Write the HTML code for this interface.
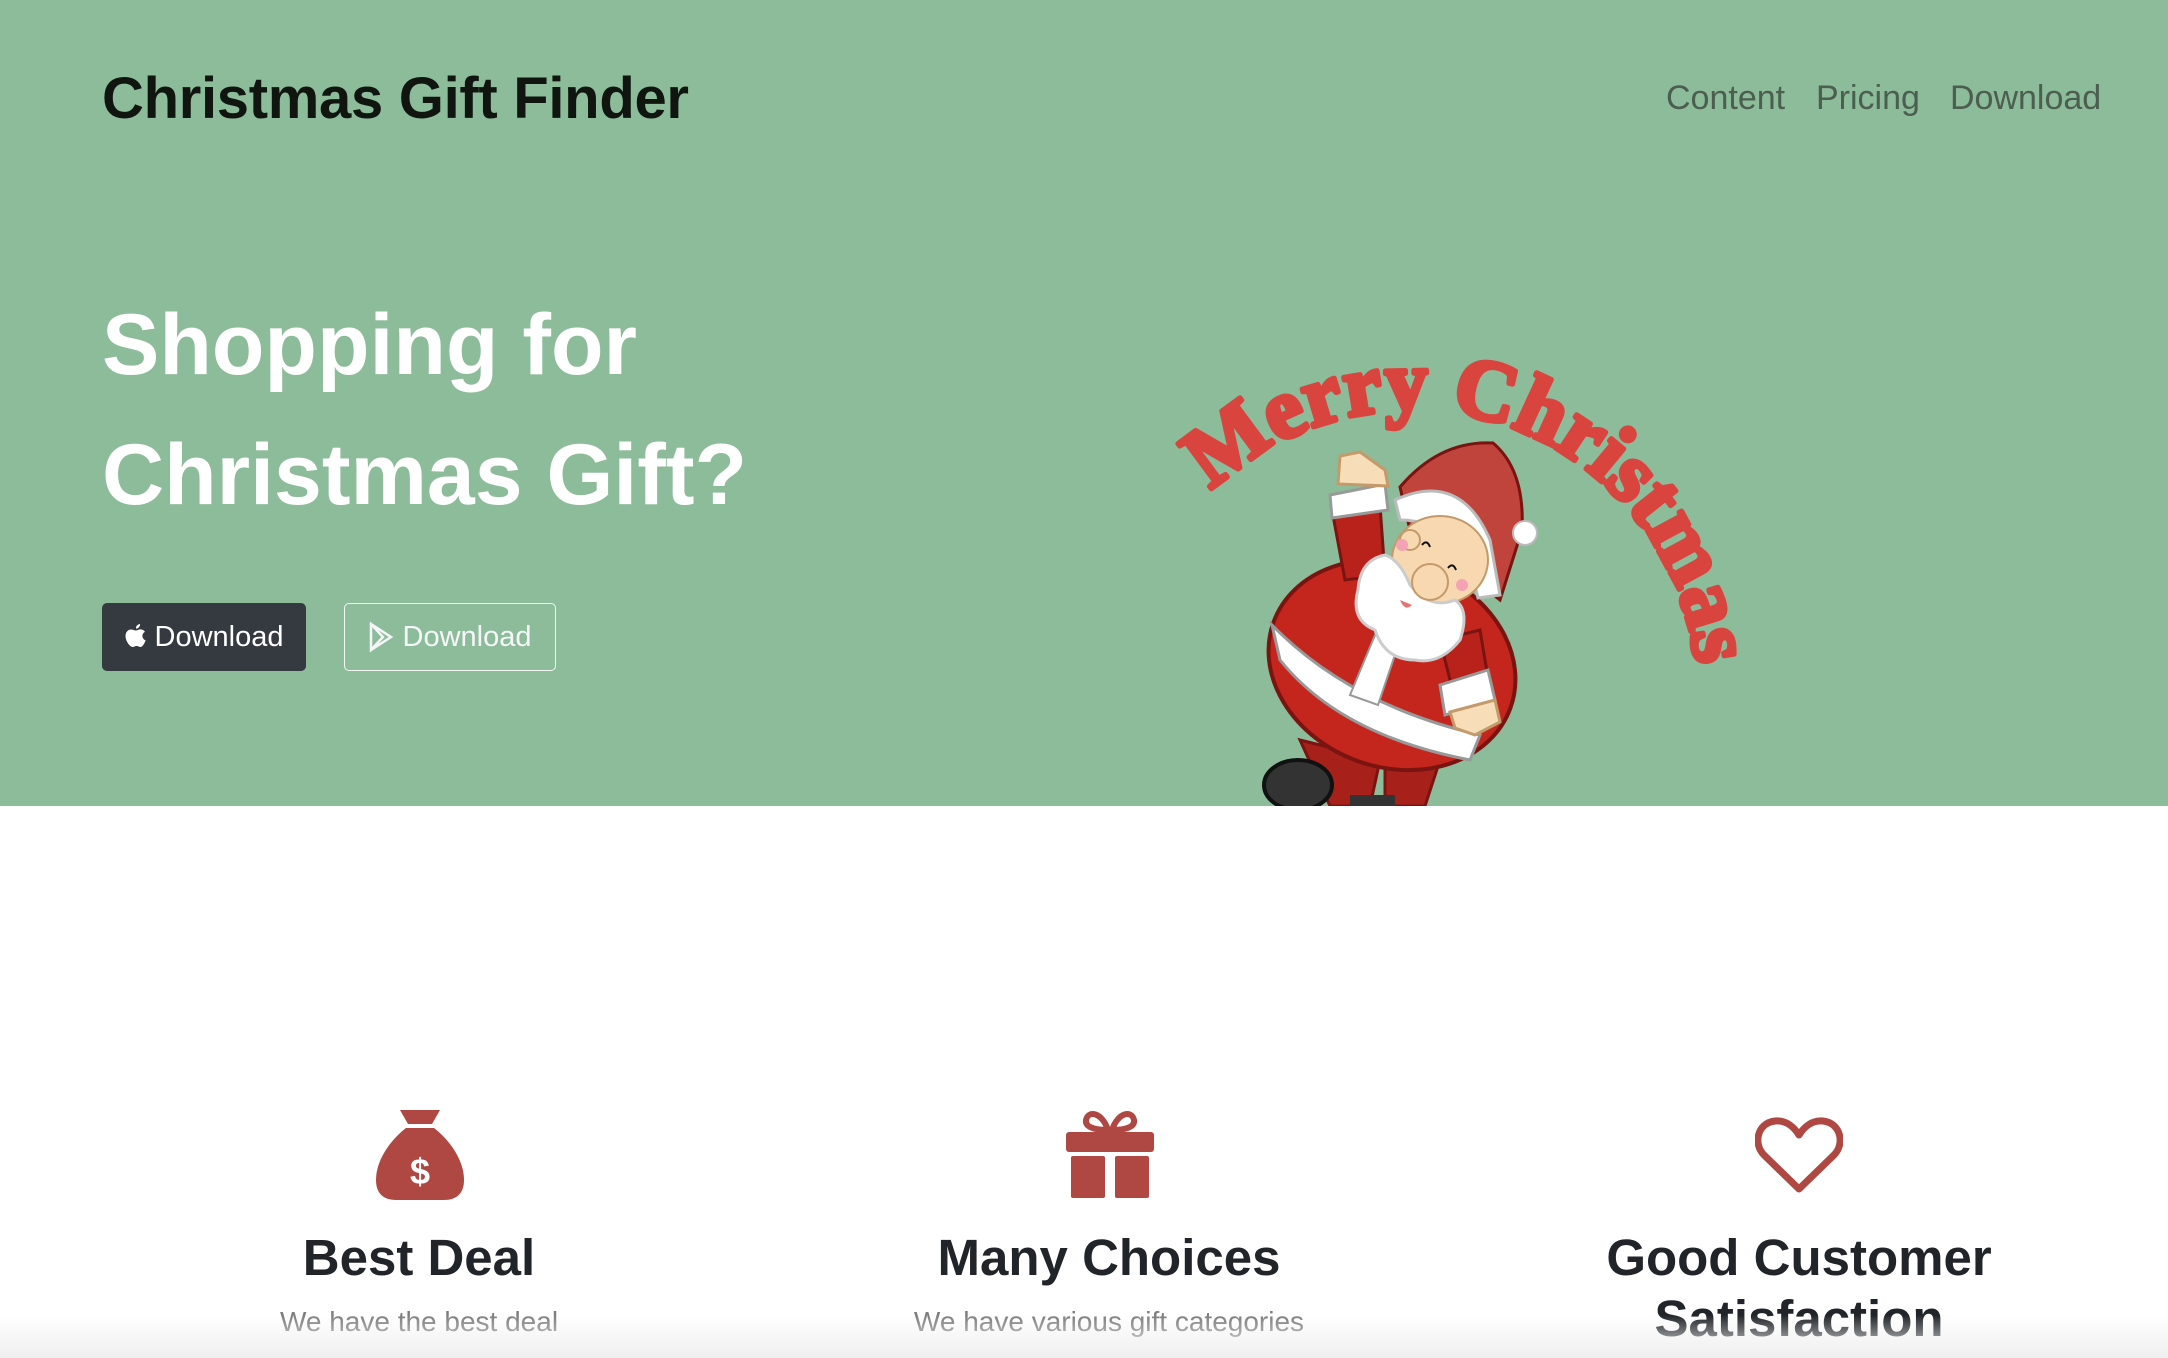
<!DOCTYPE html>
<html><head><meta charset="utf-8">
<style>
*{margin:0;padding:0;box-sizing:border-box}
body{width:2168px;height:1358px;overflow:hidden;background:#fff;font-family:"Liberation Sans",Arial,sans-serif;position:relative}
.hero{position:absolute;left:0;top:0;width:2168px;height:806px;background:#8dbc9b;overflow:hidden}
.brand{position:absolute;left:102px;top:64px;font-size:58px;font-weight:bold;color:#101510;letter-spacing:-0.3px;line-height:70px}
.nav{position:absolute;top:78px;font-size:34px;color:#4b5e50;line-height:40px}
h1{position:absolute;left:102px;top:280px;font-size:86px;line-height:130px;color:#fff;font-weight:bold}
.btn{position:absolute;top:603px;height:68px;border-radius:5px;font-size:29px;color:#fff;display:flex;align-items:center;justify-content:center;gap:8px}
.b1{left:102px;width:204px;background:#343a40}
.b2{left:344px;width:212px;border:1.5px solid #f4f6f4;color:#f4f6f8}
.feat{position:absolute;text-align:center;width:560px}
.feat h2{font-size:51px;font-weight:bold;color:#212529;line-height:61px}
.feat p{font-size:28px;color:#7d7d7d;margin-top:18px}
.shade{position:absolute;left:0;top:1315px;width:2168px;height:43px;background:linear-gradient(#fff0,#efefef)}
</style></head><body>
<div class="hero">
<div class="brand">Christmas Gift Finder</div>
<div class="nav" style="left:1666px">Content</div>
<div class="nav" style="left:1816px">Pricing</div>
<div class="nav" style="left:1950px">Download</div>
<h1>Shopping for<br>Christmas Gift?</h1>
<div class="btn b1"><svg width="22" height="26" viewBox="0 0 22 26"><path fill="#fff" d="M15 0c.3 2-1.5 4.6-4 4.6C10.7 2.4 12.6.2 15 0zM11 6.5c1.5 0 3-1.2 4.5-1.1 2.5.1 3.900 1.600 4.400 2.300-3.800 2.300-3 7.300.7 8.700-.8 2.300-2.900 6.600-5 6.600-1.700 0-2.100-1-4-1s-2.500 1-4 1C4.800 23 .5 17 .5 12 .5 7.800 3.300 5.500 6 5.500c1.800 0 3.400 1 5 1z"/></svg>Download</div>
<div class="btn b2"><svg width="26" height="30" viewBox="0 0 26 30"><path fill="none" stroke="#f4f6f8" stroke-width="2.5" d="M2 2v26l12-13zM2 2l20 13L2 28"/></svg>Download</div>
<svg width="2168" height="806" style="position:absolute;left:0;top:0">
<defs><path id="arc" d="M1212 492 A285 285 0 0 1 1695 660" fill="none"/></defs>
<text font-family="Liberation Serif,serif" font-weight="bold" font-size="86" fill="#d9443f" stroke="#d9443f" stroke-width="5" stroke-linejoin="round"><textPath href="#arc" textLength="640" lengthAdjust="spacing">Merry Christmas</textPath></text>
<path d="M1300 740 L1380 760 L1370 806 L1330 806 Z" fill="#a8201a" stroke="#7a1410" stroke-width="3"/>
<path d="M1385 760 L1440 760 L1425 806 L1385 806 Z" fill="#a8201a" stroke="#7a1410" stroke-width="3"/>
<ellipse cx="1298" cy="785" rx="34" ry="25" fill="#333" stroke="#111" stroke-width="4"/>
<rect x="1350" y="795" width="45" height="20" fill="#333"/>
<ellipse cx="1392" cy="665" rx="126" ry="102" transform="rotate(20 1392 665)" fill="#c4251d" stroke="#7a1410" stroke-width="4"/>
<path d="M1272 625 Q1350 705 1480 735 L1470 760 Q1340 735 1280 660 Z" fill="#fff" stroke="#999" stroke-width="3"/>
<path d="M1375 635 L1400 640 L1378 705 L1350 695 Z" fill="#fff" stroke="#999" stroke-width="2"/>
<path d="M1440 640 L1480 630 L1490 690 L1455 700 Z" fill="#b8221b" stroke="#7a1410" stroke-width="3"/>
<path d="M1440 685 L1488 670 L1495 700 L1445 715 Z" fill="#fff" stroke="#999" stroke-width="3"/>
<path d="M1450 712 L1495 700 L1500 722 L1475 735 L1455 728 Z" fill="#f7deb9" stroke="#c49a6a" stroke-width="3"/>
<path d="M1332 510 L1380 505 L1385 575 L1345 580 Z" fill="#b8221b" stroke="#7a1410" stroke-width="3"/>
<path d="M1330 495 L1385 484 L1388 510 L1332 518 Z" fill="#fff" stroke="#999" stroke-width="3"/>
<path d="M1338 484 L1340 456 L1360 452 L1385 470 L1388 486 Z" fill="#f7deb9" stroke="#c49a6a" stroke-width="3"/>
<path d="M1400 487 Q1440 440 1493 443 Q1525 470 1522 530 L1500 600 L1410 530 Z" fill="#c0433c" stroke="#7a1410" stroke-width="3"/>
<circle cx="1525" cy="533" r="12" fill="#fff" stroke="#bbb" stroke-width="2"/>
<path d="M1395 500 Q1460 470 1490 540 L1500 595 L1478 598 Q1460 520 1400 520 Z" fill="#fff" stroke="#bbb" stroke-width="3"/>
<ellipse cx="1440" cy="560" rx="48" ry="44" fill="#f7d8b0" stroke="#c49a6a" stroke-width="2"/>
<circle cx="1410" cy="540" r="10" fill="#f7d8b0" stroke="#c49a6a" stroke-width="2"/>
<circle cx="1402" cy="545" r="6" fill="#f5a3b4"/><circle cx="1462" cy="585" r="6" fill="#f5a3b4"/>
<path d="M1385 555 Q1360 560 1358 590 Q1350 620 1375 630 Q1385 660 1415 660 Q1440 665 1460 640 Q1470 610 1455 600 Q1430 610 1410 585 Q1400 560 1385 555 Z" fill="#fff" stroke="#ccc" stroke-width="3"/>
<circle cx="1430" cy="582" r="18" fill="#f7d8b0" stroke="#c49a6a" stroke-width="2"/>
<path d="M1422 545 q5 -6 8 2 M1448 568 q5 -6 8 2" stroke="#111" stroke-width="2" fill="none"/>
<path d="M1400 600 q5 12 12 5 Z" fill="#e57373"/>
</svg>
</div>

<svg style="position:absolute;left:376px;top:1110px" width="88" height="90" viewBox="0 0 88 90">
<path d="M24 0h40l-8 14H32z" fill="#af4843"/>
<path d="M30 18h28c18 14 30 34 30 52 0 14-8 20-20 20H20C8 90 0 84 0 70 0 52 12 32 30 18z" fill="#af4843"/>
<text x="44" y="74" text-anchor="middle" font-family="Liberation Sans" font-weight="bold" font-size="36" fill="#fff">$</text>
</svg>
<svg style="position:absolute;left:1066px;top:1110px" width="88" height="88" viewBox="0 0 88 88">
<path d="M42 20C36 2 22 0 20 10c-1 6 6 10 22 10zM46 20C52 2 66 0 68 10c1 6-6 10-22 10z" fill="none" stroke="#af4843" stroke-width="6"/>
<rect x="0" y="22" width="88" height="20" rx="3" fill="#af4843"/>
<rect x="5" y="46" width="34" height="42" rx="2" fill="#af4843"/>
<rect x="49" y="46" width="34" height="42" rx="2" fill="#af4843"/>
</svg>
<svg style="position:absolute;left:1755px;top:1115px" width="88" height="80" viewBox="0 0 88 80">
<path d="M44 74L9 40C-2 29 2 8 20 6c11-1 19 6 24 14 5-8 13-15 24-14 18 2 22 23 11 34z" fill="none" stroke="#af4843" stroke-width="7" stroke-linejoin="round"/>
</svg>

<div class="feat" style="left:139px;top:1227px"><h2>Best Deal</h2><p>We have the best deal</p></div>
<div class="feat" style="left:829px;top:1227px"><h2>Many Choices</h2><p>We have various gift categories</p></div>
<div class="feat" style="left:1519px;top:1227px"><h2>Good Customer<br>Satisfaction</h2></div>
<div class="shade"></div>
</body></html>
